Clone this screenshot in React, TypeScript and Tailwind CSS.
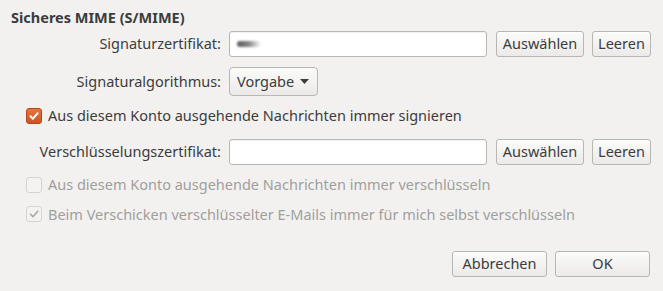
import React from "react";

const font = { fontFamily: '"Noto Sans", "DejaVu Sans", sans-serif' };

function Button({ children, className = "" }: { children: React.ReactNode; className?: string }) {
  return (
    <button
      className={`flex h-[26px] items-center justify-center rounded-[3px] border border-[#b9b7b3] bg-gradient-to-b from-[#fbfbfa] to-[#ebeae8] text-[14.5px] text-[#3c3c3c] shadow-[inset_0_1px_0_#ffffff] ${className}`}
    >
      {children}
    </button>
  );
}

function CertInput({ blurred }: { blurred?: boolean }) {
  return (
    <div className="relative h-[26px] w-[258px] rounded-[3px] border border-[#b9b7b3] bg-white shadow-[inset_0_1px_1px_rgba(0,0,0,0.06)]">
      {blurred && (
        <div className="absolute left-[7px] top-[9px] h-[6px] w-[24px] rounded-full bg-gradient-to-r from-[#5a5a5a] via-[#8a8a8a] to-transparent blur-[1px]" />
      )}
    </div>
  );
}

function Check({ checked, disabled }: { checked?: boolean; disabled?: boolean }) {
  if (!disabled && checked) {
    return (
      <span className="flex h-[16px] w-[16px] items-center justify-center rounded-[3px] border border-[#b04818] bg-gradient-to-b from-[#e8743e] to-[#cf5420]">
        <svg width="12" height="12" viewBox="0 0 12 12">
          <path d="M2.5 6.2 L5 8.7 L9.7 3.2" fill="none" stroke="#ffffff" strokeWidth="2" strokeLinecap="round" strokeLinejoin="round" />
        </svg>
      </span>
    );
  }
  return (
    <span className="flex h-[16px] w-[16px] items-center justify-center rounded-[3px] border border-[#d6d4d1] bg-[#f4f3f2]">
      {checked && (
        <svg width="12" height="12" viewBox="0 0 12 12">
          <path d="M2.5 6.2 L5 8.7 L9.7 3.2" fill="none" stroke="#aaa8a5" strokeWidth="1.6" strokeLinecap="round" strokeLinejoin="round" />
        </svg>
      )}
    </span>
  );
}

export default function App() {
  return (
    <div className="flex h-[291px] w-[663px] flex-col bg-[#f2f1f0] text-[14.5px] text-[#3c3c3c]" style={font}>
      <div className="pl-[11px] pt-[7px] font-bold leading-[20px]">Sicheres MIME (S/MIME)</div>

      <div className="mt-[4px] flex items-center">
        <div className="w-[221px] text-right">Signaturzertifikat:</div>
        <div className="ml-[8px]"><CertInput blurred /></div>
        <Button className="ml-[9px] w-[88px]">Auswählen</Button>
        <Button className="ml-[8px] w-[59px]">Leeren</Button>
      </div>

      <div className="mt-[10px] flex items-center">
        <div className="w-[221px] text-right">Signaturalgorithmus:</div>
        <button className="ml-[8px] flex h-[29px] w-[89px] items-center gap-[6px] rounded-[4px] border border-[#b9b7b3] bg-gradient-to-b from-[#fbfbfa] to-[#ebeae8] pl-[7px] text-[14.5px] text-[#3c3c3c]">
          Vorgabe
          <svg width="9" height="6" viewBox="0 0 9 6"><path d="M0 0 H9 L4.5 5 Z" fill="#3c3c3c" /></svg>
        </button>
      </div>

      <label className="mt-[9px] flex items-center gap-[6px] pl-[26px]">
        <Check checked />
        <span>Aus diesem Konto ausgehende Nachrichten immer signieren</span>
      </label>

      <div className="mt-[12px] flex items-center">
        <div className="w-[221px] text-right">Verschlüsselungszertifikat:</div>
        <div className="ml-[8px]"><CertInput /></div>
        <Button className="ml-[9px] w-[88px]">Auswählen</Button>
        <Button className="ml-[8px] w-[59px]">Leeren</Button>
      </div>

      <label className="mt-[9px] flex items-center gap-[6px] pl-[26px] text-[#a19f9c]">
        <Check disabled />
        <span>Aus diesem Konto ausgehende Nachrichten immer verschlüsseln</span>
      </label>

      <label className="mt-[8px] flex items-center gap-[6px] pl-[26px] text-[#a19f9c]">
        <Check checked disabled />
        <span>Beim Verschicken verschlüsselter E-Mails immer für mich selbst verschlüsseln</span>
      </label>

      <div className="mt-auto flex justify-end gap-[8px] pb-[14px] pr-[13px]">
        <Button className="w-[95px]">Abbrechen</Button>
        <Button className="w-[95px]">OK</Button>
      </div>
    </div>
  );
}
